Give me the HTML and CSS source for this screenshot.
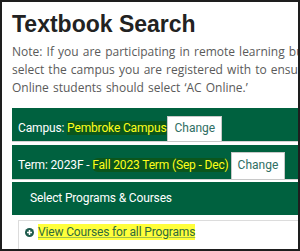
FILE: index.html
```html
<!DOCTYPE html>
<html>
<head>
<meta charset="utf-8">
<link rel="stylesheet" href="styles.css">
</head>
<body>
<div class="frame">
  <div class="page">
    <h1 class="title">Textbook Search</h1>
    <div class="note">
      <div class="note-line">Note: If you are participating in remote learning but are</div>
      <div class="note-line">select the campus you are registered with to ensure the</div>
      <div class="note-line">Online students should select ‘AC Online.’</div>
    </div>
    <div class="row row-campus">
      <span class="label">Campus: <span class="hl">Pembroke Campus</span></span>
      <button class="change change-campus">Change</button>
    </div>
    <div class="row row-term">
      <span class="label">Term: 2023F - <span class="hl hl-round">Fall 2023 Term (Sep - Dec)</span></span>
      <button class="change change-term">Change</button>
    </div>
    <div class="row-select">Select Programs &amp; Courses</div>
    <div class="panel">
      <svg class="plus" width="9" height="9" viewBox="0 0 9 9">
        <circle cx="4.5" cy="4.5" r="4.5" fill="#1e5b4d"/>
        <rect x="2" y="3.75" width="5" height="1.5" fill="#fff"/>
        <rect x="3.75" y="2" width="1.5" height="5" fill="#fff"/>
      </svg>
      <a class="link">View Courses for all Programs</a>
    </div>
  </div>
</div>
</body>
</html>
```
FILE: styles.css
```css
html, body {
  margin: 0;
  padding: 0;
  background: #fff;
}
.frame {
  width: 300px;
  height: 251px;
  box-sizing: border-box;
  border: 2px solid #1e1e1e;
  overflow: hidden;
}
.page {
  width: 340px;
  padding-left: 10px;
}
.title {
  margin: 8px 0 0 0;
  font-family: "Liberation Sans", Arial, sans-serif;
  font-weight: bold;
  font-size: 23px;
  line-height: 28px;
  color: #222;
}
.note {
  margin-top: 5px;
  font-family: "Open Sans", sans-serif;
  font-size: 12px;
  word-spacing: 1px;
  line-height: 18px;
  color: #5a5a5a;
}
.note-line {
  white-space: nowrap;
}
.row {
  display: flex;
  align-items: baseline;
  background: #00613f;
  border-bottom: 1px solid #d2d2d2;
  padding-left: 6px;
  font-family: Roboto, "Liberation Sans", sans-serif;
  font-size: 12px;
  letter-spacing: -0.15px;
  line-height: 16px;
  color: #fff;
  white-space: nowrap;
}
.row-campus {
  margin-top: 11px;
  padding-top: 8px;
  height: 34px;
  box-sizing: border-box;
  margin-bottom: 3px;
}
.row-term {
  padding-top: 7px;
  height: 35px;
  box-sizing: border-box;
  margin-bottom: 2px;
}
.hl {
  color: #ffff1a;
  background: #0b561c;
}
.hl-round {
  border-radius: 6px;
}
.change {
  margin-left: 1px;
  font-family: Roboto, "Liberation Sans", sans-serif;
  font-size: 12px;
  line-height: 16px;
  color: #2f6e64;
  background: #fff;
  border: 1px solid #c8c8c8;
  border-radius: 0;
  padding: 3px 6px 5px 6px;
}
.change-term {
  margin-left: 2px;
  padding: 4px 6px 6px 6px;
}
.row-select {
  background: #00613f;
  color: #fff;
  font-family: Roboto, "Liberation Sans", sans-serif;
  font-size: 12px;
  letter-spacing: -0.15px;
  line-height: 16px;
  padding: 8px 0 9px 18px;
}
.panel {
  margin: 5px 0 0 6px;
  border: 1px solid #dcdcdc;
  padding: 3px 0 20px 6px;
  display: flex;
  align-items: center;
  gap: 4px;
  font-family: Roboto, "Liberation Sans", sans-serif;
  font-size: 12px;
  letter-spacing: -0.15px;
  line-height: 16px;
}
.plus {
  flex: none;
}
.link {
  color: #2f6b3c;
  background: #ffff3a;
  text-decoration: underline;
  text-decoration-color: #9fbf4a;
}
```
